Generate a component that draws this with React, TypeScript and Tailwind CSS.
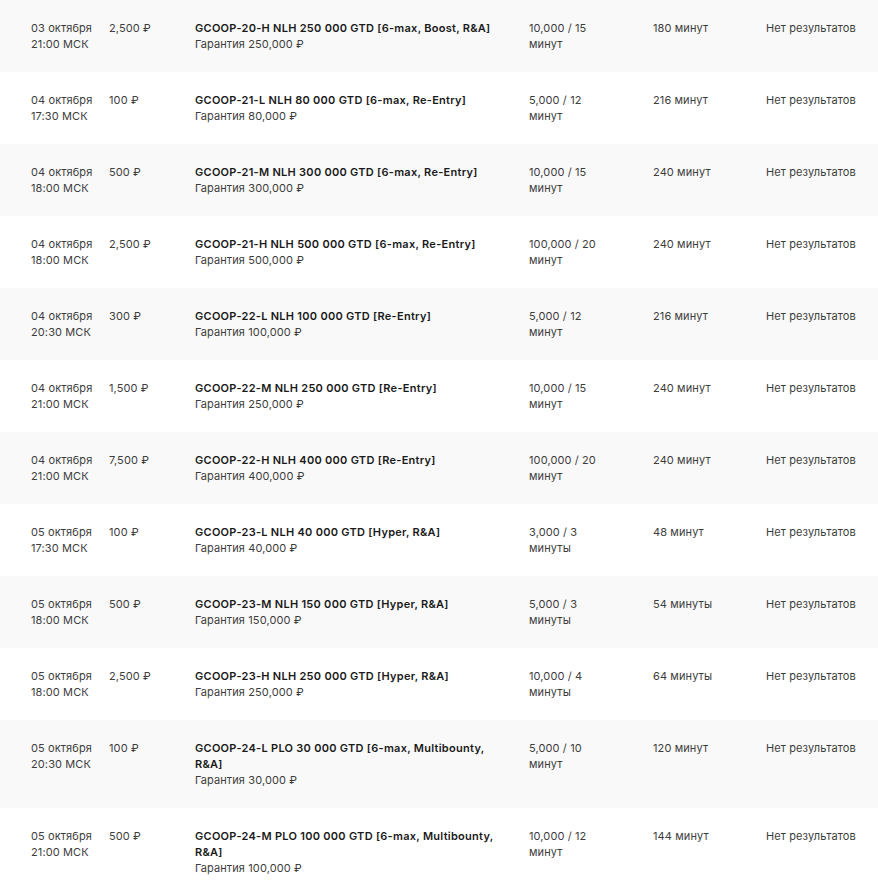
const rows = [
  { date: "03 октября", time: "21:00 МСК", price: "2,500 ₽", title: "GCOOP-20-H NLH 250 000 GTD [6-max, Boost, R&A]", gtd: "250,000 ₽", stack: "10,000 / 15", unit: "минут", dur: "180 минут" },
  { date: "04 октября", time: "17:30 МСК", price: "100 ₽", title: "GCOOP-21-L NLH 80 000 GTD [6-max, Re-Entry]", gtd: "80,000 ₽", stack: "5,000 / 12", unit: "минут", dur: "216 минут" },
  { date: "04 октября", time: "18:00 МСК", price: "500 ₽", title: "GCOOP-21-M NLH 300 000 GTD [6-max, Re-Entry]", gtd: "300,000 ₽", stack: "10,000 / 15", unit: "минут", dur: "240 минут" },
  { date: "04 октября", time: "18:00 МСК", price: "2,500 ₽", title: "GCOOP-21-H NLH 500 000 GTD [6-max, Re-Entry]", gtd: "500,000 ₽", stack: "100,000 / 20", unit: "минут", dur: "240 минут" },
  { date: "04 октября", time: "20:30 МСК", price: "300 ₽", title: "GCOOP-22-L NLH 100 000 GTD [Re-Entry]", gtd: "100,000 ₽", stack: "5,000 / 12", unit: "минут", dur: "216 минут" },
  { date: "04 октября", time: "21:00 МСК", price: "1,500 ₽", title: "GCOOP-22-M NLH 250 000 GTD [Re-Entry]", gtd: "250,000 ₽", stack: "10,000 / 15", unit: "минут", dur: "240 минут" },
  { date: "04 октября", time: "21:00 МСК", price: "7,500 ₽", title: "GCOOP-22-H NLH 400 000 GTD [Re-Entry]", gtd: "400,000 ₽", stack: "100,000 / 20", unit: "минут", dur: "240 минут" },
  { date: "05 октября", time: "17:30 МСК", price: "100 ₽", title: "GCOOP-23-L NLH 40 000 GTD [Hyper, R&A]", gtd: "40,000 ₽", stack: "3,000 / 3", unit: "минуты", dur: "48 минут" },
  { date: "05 октября", time: "18:00 МСК", price: "500 ₽", title: "GCOOP-23-M NLH 150 000 GTD [Hyper, R&A]", gtd: "150,000 ₽", stack: "5,000 / 3", unit: "минуты", dur: "54 минуты" },
  { date: "05 октября", time: "18:00 МСК", price: "2,500 ₽", title: "GCOOP-23-H NLH 250 000 GTD [Hyper, R&A]", gtd: "250,000 ₽", stack: "10,000 / 4", unit: "минуты", dur: "64 минуты" },
  { date: "05 октября", time: "20:30 МСК", price: "100 ₽", title: "GCOOP-24-L PLO 30 000 GTD [6-max, Multibounty, R&A]", gtd: "30,000 ₽", stack: "5,000 / 10", unit: "минут", dur: "120 минут" },
  { date: "05 октября", time: "21:00 МСК", price: "500 ₽", title: "GCOOP-24-M PLO 100 000 GTD [6-max, Multibounty, R&A]", gtd: "100,000 ₽", stack: "10,000 / 12", unit: "минут", dur: "144 минут" },
];

export default function App() {
  return (
    <div
      className="w-full bg-white text-[11px] leading-4 text-[#3d3d3d] tracking-[0.01em]"
      style={{ fontFamily: "Inter, 'Noto Sans', sans-serif" }}
    >
      {rows.map((r, i) => (
        <div
          key={i}
          className={`grid grid-cols-[78px_86px_334px_124px_113px_1fr] pl-[31px] py-5 ${
            i % 2 === 0 ? "bg-[#f9f9f9]" : "bg-white"
          }`}
        >
          {/* date */}
          <div className="flex flex-col">
            <span>{r.date}</span>
            <span>{r.time}</span>
          </div>
          <div>{r.price}</div>
          {/* title */}
          <div className="flex flex-col pr-7">
            <span className="font-semibold text-[#1a1a1a] tracking-[0.025em]">{r.title}</span>
            <span>Гарантия {r.gtd}</span>
          </div>
          <div className="flex flex-col">
            <span>{r.stack}</span>
            <span>{r.unit}</span>
          </div>
          <div>{r.dur}</div>
          <div className="whitespace-nowrap">Нет результатов</div>
        </div>
      ))}
    </div>
  );
}
